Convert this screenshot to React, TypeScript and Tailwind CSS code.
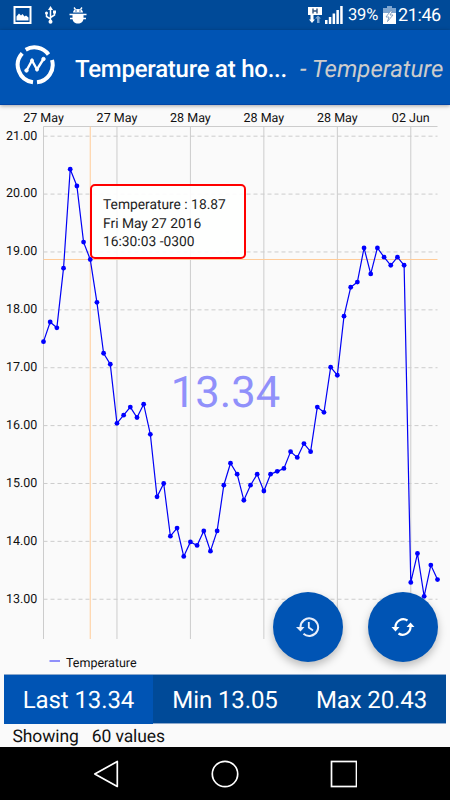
import type { ReactNode } from "react"

const readings = [
  17.45, 17.79, 17.69, 18.72, 20.43, 20.14, 19.17, 18.87, 18.13, 17.25,
  17.06, 16.04, 16.18, 16.32, 16.14, 16.37, 15.85, 14.77, 15.0, 14.09,
  14.23, 13.74, 13.99, 13.93, 14.18, 13.83, 14.18, 14.97, 15.35, 15.16,
  14.71, 14.97, 15.16, 14.87, 15.16, 15.21, 15.26, 15.55, 15.45, 15.69,
  15.55, 16.32, 16.23, 17.01, 16.87, 17.89, 18.39, 18.48, 19.07, 18.62,
  19.07, 18.91, 18.77, 18.91, 18.77, 13.29, 13.79, 13.05, 13.59, 13.34,
]

const dates = ["27 May", "27 May", "28 May", "28 May", "28 May", "02 Jun"]
const levels = [21, 20, 19, 18, 17, 16, 15, 14, 13]

const LEFT = 43.5
const RIGHT = 437.5
const TOP = 21.5
const BOTTOM = 534
const SELECTED = 7

const px = (i: number) => LEFT + (i * (RIGHT - LEFT)) / (readings.length - 1)
const py = (v: number) => 31.2 + (21 - v) * 57.88

function StatusBar() {
  return (
    <div className="flex h-[30px] items-center bg-[#004a98] pl-[13px] pr-[9px] text-white">
      <svg width="19" height="18" viewBox="0 0 19 18">
        <rect x="1.5" y="1" width="16" height="16" fill="none" stroke="#fff" strokeWidth="2" />
        <path d="M3.500 14.500v-4L6 7.500l2 2L9.500 8l2 2.500 1.500-1 2.500 2v3z" fill="#fff" />
      </svg>
      <svg className="ml-[12px]" width="13" height="18" viewBox="0 0 13 18">
        <path d="M6.500 3v12M2.500 7v3.500l4 2.500M10.500 6v3l-4 2.500" fill="none" stroke="#fff" strokeWidth="1.500" />
        <path d="M6.500 0l2.500 4h-5z" fill="#fff" />
        <circle cx="6.500" cy="15.700" r="2" fill="#fff" />
        <circle cx="2.500" cy="7" r="1.500" fill="#fff" />
        <rect x="9" y="4.500" width="3" height="3" fill="#fff" />
      </svg>
      <svg className="ml-[12px]" width="18" height="17" viewBox="0 0 18 17">
        <path d="M4 5.500C4 3 6 2 9 2s5 1 5 3.500zM3.500 7h11v4.500c0 3-2.500 5-5.500 5s-5.500-2-5.500-5z" fill="#fff" />
        <path d="M5 .5l1.500 2M13 .5l-1.500 2M.5 7.500h17M1 11.500h16" stroke="#fff" strokeWidth="1.300" />
        <circle cx="7" cy="4" r=".7" fill="#004a98" />
        <circle cx="11" cy="4" r=".7" fill="#004a98" />
      </svg>
      <div className="ml-auto flex items-center">
        <svg width="16" height="18" viewBox="0 0 16 18">
          <rect x="1" y="1" width="14" height="8" fill="#fff" />
          <path d="M6 2.500v5M10 2.500v5M6 5h4" stroke="#33557f" strokeWidth="1.400" />
          <path d="M3.500 9h3v4.500H8L5 17l-3-3.500h1.500z" fill="#fff" />
          <path d="M10 17v-4.500H8L11 9.500l3 3h-1.500V17z" fill="#7fa6d0" />
        </svg>
        <svg className="ml-[2px]" width="18" height="18" viewBox="0 0 18 18">
          <path d="M0 14h2.500v4H0zM3.800 11h2.500v7H3.800zM7.600 7.500h2.500V18H7.600zM11.400 4h2.500v14h-2.500zM15.200 0h2.500v18h-2.500z" fill="#fff" />
        </svg>
        <span className="ml-[5px] w-[31px] whitespace-nowrap pt-[2px] text-[16.500px] tracking-[-0.2px]">39%</span>
        <svg className="ml-[4px]" width="13" height="18" viewBox="0 0 13 18">
          <path d="M4 0h5v2h4v5H0V2h4z" fill="#7fa6d0" />
          <path d="M0 7h13v11H0z" fill="#fff" />
          <path d="M7.500 5L3 11h3l-1.500 4.500L10 9H7l2.500-4z" fill="#fff" stroke="#6f8fb5" strokeWidth=".8" />
        </svg>
        <span className="ml-[2px] w-[43px] whitespace-nowrap pt-px text-[18px] tracking-[-0.4px]">21:46</span>
      </div>
    </div>
  )
}

function AppBar() {
  return (
    <header className="relative z-10 flex h-[75px] items-center border-b border-[#0045a8] bg-[#0054b4] pl-[15px] shadow-[0_1px_4px_rgba(0,0,0,0.35)]">
      <svg width="40" height="42" viewBox="0 0 40 42" className="-mt-[4px]" fill="none" stroke="#fff">
        <path d="M10.700 5.700A17.500 17.500 0 0 1 33.500 10.500M37 16A17.500 17.500 0 0 1 22 38.300M18 38.300A17.500 17.500 0 0 1 7.200 9.300" strokeWidth="4" />
        <path d="M11.500 26.500L17 16.500l5 9L28.500 15" strokeWidth="2.400" />
        <circle cx="11.500" cy="26.500" r="1.700" fill="#fff" />
        <circle cx="17" cy="16.500" r="1.500" fill="#fff" />
        <circle cx="22" cy="25.500" r="1.500" fill="#fff" />
        <circle cx="28.500" cy="15" r="1.700" fill="#fff" />
      </svg>
      <h1 className="ml-[20px] w-[225px] whitespace-nowrap pt-[3px] text-[24px] font-medium tracking-[-0.25px] text-white">Temperature at ho...</h1>
      <span className="whitespace-nowrap pt-[3px] text-[24px] italic text-[#cccccc]">- Temperature</span>
    </header>
  )
}

function Chart() {
  const line = readings.map((v, i) => `${px(i)},${py(v)}`).join(" ")

  return (
    <svg width="450" height="569" viewBox="0 0 450 569" className="block">
      <g stroke="#cccccc" strokeWidth="1">
        <line x1={LEFT} x2={RIGHT} y1={TOP} y2={TOP} />
        {dates.map((_, i) => (
          <line key={i} x1={px(i * 11)} x2={px(i * 11)} y1={TOP} y2={BOTTOM} />
        ))}
        {levels.map((v) => (
          <line key={v} x1={LEFT} x2={RIGHT} y1={py(v)} y2={py(v)} strokeDasharray="4 3" />
        ))}
      </g>
      <g fill="#111" fontSize="12.500" textAnchor="middle">
        {dates.map((d, i) => (
          <text key={i} x={px(i * 11)} y="16.500">{d}</text>
        ))}
      </g>
      <g fill="#111" fontSize="12.500" textAnchor="end">
        {levels.map((v) => (
          <text key={v} x="37.300" y={py(v) + 3.300}>{v.toFixed(2)}</text>
        ))}
      </g>
      <g stroke="#ffcc99" strokeWidth="1">
        <line x1={px(SELECTED)} x2={px(SELECTED)} y1={TOP} y2={BOTTOM} />
        <line x1={LEFT} x2={RIGHT} y1={py(18.87)} y2={py(18.87)} />
      </g>
      <text x="225.500" y="302" textAnchor="middle" fontSize="43.500" fill="#9090fa">13.34</text>
      <polyline points={line} fill="none" stroke="#0000f5" strokeWidth="1.200" />
      {readings.map((v, i) => (
        <circle key={i} cx={px(i)} cy={py(v)} r="2.400" fill="#0000ff" />
      ))}
      <line x1="49.500" x2="60" y1="556" y2="556" stroke="#9090fa" strokeWidth="2" />
      <text x="66" y="562" fontSize="12.500" fill="#111">Temperature</text>
    </svg>
  )
}

function Marker() {
  return (
    <div className="absolute left-[90px] top-[79px] h-[75px] w-[156px] rounded-[5px] border-2 border-[#ff0000] bg-white/90 pl-[11px] pt-[10px] text-[13.800px] leading-[18.500px] text-[#222]">
      <div>Temperature : 18.87</div>
      <div>Fri May 27 2016</div>
      <div>16:30:03 -0300</div>
    </div>
  )
}

function Fab({ children }: { children: ReactNode }) {
  return (
    <button className="flex size-[70px] items-center justify-center rounded-full bg-[#0054b4] shadow-[0_4px_8px_rgba(0,0,0,0.25)]">
      {children}
    </button>
  )
}

function Stats() {
  return (
    <div className="mx-1 flex h-[50px] items-center border-y border-[#8ba8cc] bg-[#004a98] pt-px text-[24px] tracking-[-0.1px] text-white">
      <div className="-mt-px flex h-[49px] w-[149px] items-center justify-center bg-[#0054b4] pt-px">Last 13.34</div>
      <div className="w-[144px] text-center">Min 13.05</div>
      <div className="flex-1 text-center">Max 20.43</div>
    </div>
  )
}

function NavBar() {
  return (
    <nav className="flex h-[53px] items-center justify-center bg-black">
      <svg width="264" height="28" viewBox="0 0 264 28" fill="none" stroke="#fff" strokeWidth="1.700">
        <path d="M24.300 1.500v25L1.800 14z" strokeLinejoin="round" />
        <circle cx="132" cy="14" r="12.700" />
        <rect x="238.500" y="1.500" width="25" height="25" />
      </svg>
    </nav>
  )
}

export default function App() {
  return (
    <div className="h-[800px] w-[450px] overflow-hidden bg-[#fafafa] font-[Roboto,sans-serif] [text-rendering:geometricPrecision]">
      <StatusBar />
      <AppBar />
      <main className="relative">
        <Chart />
        <Marker />
        <div className="absolute right-[12.500px] top-[487px] flex gap-[25px]">
          <Fab>
            <svg width="24" height="22" viewBox="0 0 24 22" fill="none" stroke="#e8eefa" strokeWidth="2">
              <path d="M4.500 11a8.800 8.800 0 1 1 3 6.800" />
              <path d="M0 11h8.500L4.500 15.500z" fill="#e8eefa" stroke="none" />
              <path d="M12.800 6v5.500l4.200 3" strokeWidth="1.800" />
            </svg>
          </Fab>
          <Fab>
            <svg width="24" height="20" viewBox="0 0 24 20" fill="none" stroke="#fff" strokeWidth="2.200">
              <path d="M4.500 10.500A7.800 7.800 0 0 1 16.500 3.500M19.500 9.500A7.800 7.800 0 0 1 7.500 16.500" />
              <path d="M.5 10h8l-4 4.500zM15.500 10h8l-4-4.500z" fill="#fff" stroke="none" />
            </svg>
          </Fab>
        </div>
      </main>
      <Stats />
      <div className="flex h-[23px] items-center gap-[13px] pl-[12.500px] pt-[4px] text-[17.500px] tracking-[-0.1px] text-[#111]">
        <span>Showing</span>
        <span>60 values</span>
      </div>
      <NavBar />
    </div>
  )
}
